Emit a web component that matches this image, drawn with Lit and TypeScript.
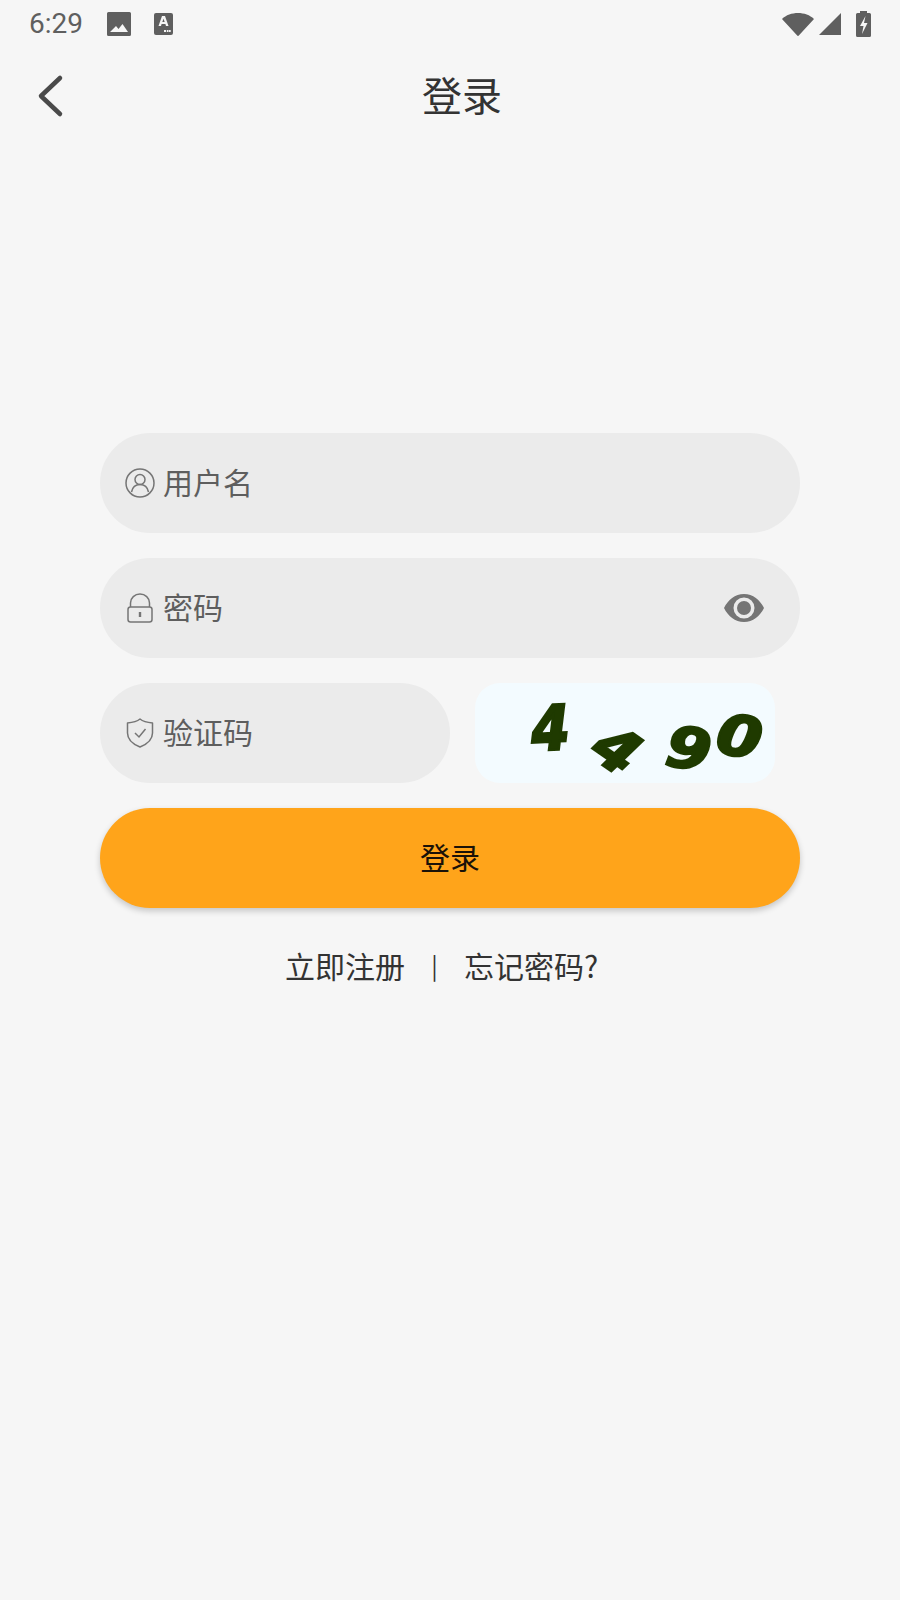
import { LitElement, html, css } from "lit";
import { customElement } from "lit/decorators.js";

@customElement("app-root")
export class AppRoot extends LitElement {
  static styles = css`
    :host { display: block; width: 900px; height: 1600px; background: #f6f6f6; font-family: "Noto Sans CJK SC", "Noto Sans", sans-serif; overflow: hidden; }
    .status { height: 48px; display: flex; align-items: center; padding: 0 29px 0 29px; color: #5f5f5f; }
    .time { font: 400 28px/48px Roboto, sans-serif; width: 78px; }
    .status svg { display: block; fill: #5f5f5f; }
    .s1 { margin-right: 23px; }
    .spacer { flex: 1; }
    .nav { height: 96px; display: flex; align-items: center; position: relative; }
    .back { margin-left: 36px; display: block; }
    .title { position: absolute; left: 24px; right: 0; text-align: center; font-size: 40px; line-height: 92px; top: 0; color: #333; }
    .form { margin: 289px 100px 0; display: flex; flex-direction: column; gap: 25px; }
    .field { height: 100px; border-radius: 50px; background: #ebebeb; display: flex; align-items: center; padding-left: 25px; box-sizing: border-box; color: #5e5e5e; font-size: 30px; }
    .field .ic { width: 30px; height: 30px; margin-right: 8px; display: block; flex: none; }
    .label { padding-bottom: 4px; }
    .eye { margin-left: auto; margin-right: 36px; display: block; }
    .row { display: flex; gap: 25px; }
    .short { width: 350px; }
    .captcha { width: 300px; height: 100px; border-radius: 25px; background: #f3fbff; position: relative; }
    .d { position: absolute; font: italic 700 56px/1 "DejaVu Sans", sans-serif; -webkit-text-stroke: 2.5px #1f3a00; color: #1f3a00; }
    .btn { height: 100px; border-radius: 50px; background: #ffa41a; box-shadow: 0 3px 6px rgba(0,0,0,.2); display: flex; align-items: center; justify-content: center; font-size: 30px; color: #1a1208; padding-bottom: 4px; box-sizing: border-box; }
    .links { margin-top: 27px; display: flex; padding-left: 285px; font-size: 30px; line-height: 60px; color: #333; white-space: pre; }
    .sep { width: 59px; text-align: center; font-size: 24px; }
  `;

  render() {
    return html`
      <div class="status">
        <span class="time">6:29</span>
        <svg class="s1" width="24" height="24" viewBox="0 0 24 24"><path fill-rule="evenodd" d="M1.500 0h21A1.500 1.500 0 0 1 24 1.500v21a1.500 1.500 0 0 1-1.500 1.500h-21A1.500 1.500 0 0 1 0 22.500v-21A1.500 1.500 0 0 1 1.500 0zM3 20h18l-5.500-8-4 5-2.500-3z"/></svg>
        <svg width="19" height="22" viewBox="0 0 19 22"><rect width="19" height="22" rx="2"/><path fill="#f6f6f6" d="M8 3h3l3.500 10H12l-.6-2H7.600L7 13H4.500zm1.500 2.800L8.300 9h2.400zM10 17h2v2h-2zM12.800 17h1.700v2h-1.700zM15 17h1.700v2H15z"/></svg>
        <span class="spacer"></span>
        <svg width="32" height="24" viewBox="0 0 32 24" style="margin-right:5px"><path d="M0 7C4 3 10 1 16 1s12 2 16 6L16.800 23.500a1 1 0 0 1-1.600 0z"/></svg>
        <svg width="22" height="22" viewBox="0 0 22 22" style="margin-right:15px"><path d="M22 0v22H0z"/></svg>
        <svg width="15" height="26" viewBox="0 0 15 26"><path fill-rule="evenodd" d="M4 2V0h7v2h2.500A1.500 1.500 0 0 1 15 3.500v21a1.500 1.500 0 0 1-1.500 1.500h-12A1.500 1.500 0 0 1 0 24.500v-21A1.500 1.500 0 0 1 1.500 2zM9.500 5 4 15h3.500l-1.500 8 5.500-11H8z"/></svg>
      </div>
      <div class="nav">
        <svg class="back" width="30" height="44" viewBox="0 0 30 44"><path d="M24 4 5 22l19 18" fill="none" stroke="#4a4a4a" stroke-width="4.500" stroke-linecap="round" stroke-linejoin="round"/></svg>
        <div class="title">登录</div>
      </div>
      <div class="form">
        <div class="field">
          <svg class="ic" viewBox="0 0 30 30" fill="none" stroke="#757575" stroke-width="1.500"><circle cx="15" cy="15" r="14"/><circle cx="15" cy="11.500" r="5"/><path d="M6.500 24c1-5 4.500-7.500 8.500-7.500s7.500 2.500 8.500 7.500"/></svg>
          <span class="label">用户名</span>
        </div>
        <div class="field">
          <svg class="ic" viewBox="0 0 30 30" fill="none" stroke="#757575" stroke-width="1.500"><rect x="3" y="14" width="24" height="15" rx="2.500"/><path d="M5.500 14V10a9.500 9 0 0 1 19 0V14"/><rect x="13.800" y="19" width="2.400" height="5" fill="#757575" stroke="none"/></svg>
          <span class="label">密码</span>
          <svg class="eye" width="40" height="28" viewBox="0 0 40 28"><path fill="#757575" fill-rule="evenodd" d="M20 0c9 0 16 6 20 14-4 8-11 14-20 14S4 22 0 14C4 6 11 0 20 0zm0 3.500a10.500 10.500 0 1 0 0 21 10.500 10.500 0 0 0 0-21z"/><circle cx="20" cy="14" r="7" fill="#757575"/></svg>
        </div>
        <div class="row">
          <div class="field short">
            <svg class="ic" viewBox="0 0 30 30" fill="none" stroke="#757575" stroke-width="1.500"><path d="M15 1C18 3.500 22 4.500 27.500 5V15c0 7-5 11-12.500 14C7.500 26 2.500 22 2.500 15V5C8 4.500 12 3.500 15 1z" stroke-linejoin="round"/><path d="m10 15 4 4 6.500-8"/></svg>
            <span class="label">验证码</span>
          </div>
          <div class="captcha">
            <span class="d" style="left:56px;top:18px;transform:rotate(-3deg) scale(.98,1.100);">4</span>
            <span class="d" style="left:122px;top:39px;transform:rotate(35deg) scale(1.060);">4</span>
            <span class="d" style="left:194px;top:38px;transform:rotate(8deg) scale(1.150,1);">9</span>
            <span class="d" style="left:245px;top:26px;transform:rotate(10deg) scale(1.150,1);">0</span>
          </div>
        </div>
        <div class="btn">登录</div>
      </div>
      <div class="links"><span>立即注册</span><span class="sep">|</span><span>忘记密码?</span></div>
    `;
  }
}
